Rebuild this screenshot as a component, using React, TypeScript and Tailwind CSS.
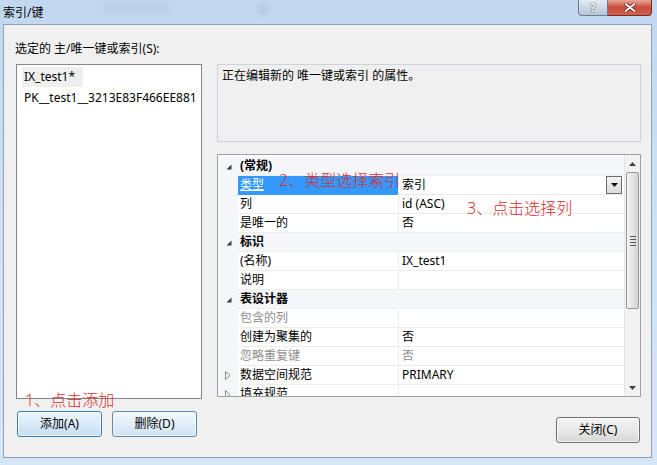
import React from "react";

const Expanded = () => (
  <svg width="6" height="6" viewBox="0 0 6 6" className="block">
    <polygon points="5.5,0.5 5.5,5.5 0.5,5.5" fill="#3a3a3a" />
  </svg>
);

const Collapsed = () => (
  <svg width="6" height="9" viewBox="0 0 6 9" className="block">
    <polygon points="0.5,0.5 5,4.5 0.5,8.5" fill="none" stroke="#8a8a8a" strokeWidth="1" />
  </svg>
);

type Row =
  | { kind: "cat"; name: string }
  | { kind: "prop"; name: string; value?: string; disabled?: boolean; selected?: boolean; collapsed?: boolean; dropdown?: boolean };

const rows: Row[] = [
  { kind: "cat", name: "(常规)" },
  { kind: "prop", name: "类型", value: "索引", selected: true, dropdown: true },
  { kind: "prop", name: "列", value: "id (ASC)" },
  { kind: "prop", name: "是唯一的", value: "否" },
  { kind: "cat", name: "标识" },
  { kind: "prop", name: "(名称)", value: "IX_test1" },
  { kind: "prop", name: "说明", value: "" },
  { kind: "cat", name: "表设计器" },
  { kind: "prop", name: "包含的列", value: "", disabled: true },
  { kind: "prop", name: "创建为聚集的", value: "否" },
  { kind: "prop", name: "忽略重复键", value: "否", disabled: true },
  { kind: "prop", name: "数据空间规范", value: "PRIMARY", collapsed: true },
  { kind: "prop", name: "填充规范", value: "", collapsed: true },
];

function GridRow({ r }: { r: Row }) {
  if (r.kind === "cat") {
    return (
      <div className="h-[19px] flex shrink-0 bg-[#f4f6f9]">
        <div className="w-[20px] flex items-center justify-center pl-[1px]">
          <Expanded />
        </div>
        <div className="flex-1 border-b border-[#eceef1] flex items-center pl-[2px] font-bold leading-[18px]">
          {r.name}
        </div>
      </div>
    );
  }
  return (
    <div className="h-[19px] flex shrink-0">
      <div className="w-[20px] bg-[#f4f6f9] flex items-center justify-center">
        {r.collapsed ? <Collapsed /> : null}
      </div>
      <div
        className={
          r.selected
            ? "w-[160px] bg-[#3399ff] text-white flex items-center pl-[2px] border-b border-[#3399ff]"
            : "w-[160px] bg-white flex items-center pl-[2px] border-b border-[#ededed] " +
              (r.disabled ? "text-[#8d8d8d]" : "text-black")
        }
      >
        <span className={r.selected ? "underline underline-offset-[1px] leading-[16px]" : "leading-[16px]"}>
          {r.name}
        </span>
      </div>
      <div
        className={
          "flex-1 bg-white border-l border-[#ededed] border-b flex items-center pl-[3px] relative " +
          (r.disabled ? "text-[#8d8d8d]" : "text-black")
        }
      >
        <span className="leading-[16px]">{r.value}</span>
        {r.dropdown ? (
          <div className="absolute right-[2px] top-0 w-[16px] h-[18px] border border-[#6e6e6e] bg-gradient-to-b from-[#f4f4f4] to-[#dcdcdc] flex items-center justify-center">
            <svg width="7" height="4" viewBox="0 0 7 4">
              <polygon points="0,0 7,0 3.5,4" fill="#111" />
            </svg>
          </div>
        ) : null}
      </div>
    </div>
  );
}

export default function App() {
  return (
    <div className="w-[657px] h-[465px] bg-gradient-to-b from-[#c2d8f0] via-[#cfe1f4] to-[#d7e6f6] flex flex-col font-['Noto_Sans','Noto_Sans_CJK_SC',sans-serif] text-[12px] text-black relative overflow-hidden">
      {/* title bar */}
      <div className="h-[24px] shrink-0 flex items-start relative">
        <span className="ml-[3px] mt-[4px] leading-[18px] text-[12px]">索引/键</span>
        <div className="absolute left-[100px] top-[5px] w-[70px] h-[8px] rounded-full bg-[#aabccf] opacity-40 blur-[4px]" />
        <div className="absolute left-[257px] top-[5px] w-[12px] h-[10px] rounded-full bg-[#9db0c4] opacity-40 blur-[3px]" />
        <div className="ml-auto mr-[5px] flex">
          <div className="w-[30px] h-[16px] border border-t-0 border-[#6b7b90] rounded-bl-[4px] bg-gradient-to-b from-[#e6ecf3] to-[#b7c4d4] flex items-center justify-center text-white font-bold text-[12px] leading-none [text-shadow:0_0_1px_#333,0_0_1px_#333]">
            ?
          </div>
          <div className="w-[44px] h-[16px] border border-t-0 border-l-0 border-[#7a2a22] rounded-br-[4px] bg-gradient-to-b from-[#e9a496] via-[#c94a3c] to-[#d0604f] flex items-center justify-center">
            <svg width="12" height="9" viewBox="0 0 12 9">
              <path d="M1.5 1 L10.5 8 M10.5 1 L1.5 8" stroke="#5a1a14" strokeWidth="3.2" strokeLinecap="round" />
              <path d="M1.5 1 L10.5 8 M10.5 1 L1.5 8" stroke="#ffffff" strokeWidth="1.8" strokeLinecap="round" />
            </svg>
          </div>
        </div>
      </div>

      {/* client area */}
      <div className="ml-[3px] mr-[5px] mb-[7px] flex-1 border border-[#8ea2b7] bg-[#f0f0f0] flex flex-col">
        <div className="pt-[16px] pl-[11px] leading-[16px]">选定的 主/唯一键或索引(S):</div>
        <div className="mt-[7px] pl-[12px] flex">
          {/* left column */}
          <div className="w-[186px] flex flex-col">
            <div className="h-[335px] border border-[#828790] bg-white pt-[1px] pl-[5px]">
              <div className="h-[21px] flex items-center">
                <span className="bg-[#efefef] pl-[2px] pr-[8px] leading-[20px]">IX_test1*</span>
              </div>
              <div className="h-[21px] flex items-center pl-[2px]">
                <span className="leading-[20px]">PK__test1__3213E83F466EE881</span>
              </div>
            </div>
            <div className="mt-[12px] flex gap-[10px] pl-[1px]">
              <button className="w-[85px] h-[26px] rounded-[3px] border border-[#3c7fb1] bg-gradient-to-b from-[#eaf4fc] via-[#d9ebf9] to-[#c3def3] shadow-[inset_0_0_0_1px_rgba(255,255,255,0.6)] text-[12px] leading-none">
                添加(A)
              </button>
              <button className="w-[85px] h-[26px] rounded-[3px] border border-[#5f89ab] bg-gradient-to-b from-[#f1f7fc] via-[#e2eef8] to-[#cfe3f3] shadow-[inset_0_0_0_1px_rgba(255,255,255,0.6)] text-[12px] leading-none">
                删除(D)
              </button>
            </div>
          </div>

          {/* right column */}
          <div className="ml-[15px] w-[424px] flex flex-col">
            <div className="h-[78px] border border-[#ccd3da] bg-[#f0f0f0] pl-[4px] pt-[3px] leading-[16px]">
              正在编辑新的 唯一键或索引 的属性。
            </div>
            <div className="mt-[12px] h-[243px] border border-[#a0a0a0] bg-white flex overflow-hidden">
              <div className="flex-1 flex flex-col pt-[2px] overflow-hidden">
                {rows.map((r, i) => (
                  <GridRow key={i} r={r} />
                ))}
              </div>
              {/* scrollbar */}
              <div className="w-[16px] bg-[#f2f2f2] border-l border-[#e6e6e6] flex flex-col items-center">
                <div className="h-[17px] w-full flex items-center justify-center">
                  <svg width="7" height="4" viewBox="0 0 7 4">
                    <polygon points="3.5,0 7,4 0,4" fill="#404040" />
                  </svg>
                </div>
                <div className="w-[13px] h-[137px] rounded-[2px] border border-[#979797] bg-gradient-to-r from-[#f3f3f3] via-[#e6e6e6] to-[#d4d4d4] flex flex-col items-center justify-center gap-[2px]">
                  <div className="w-[6px] h-[1px] bg-[#555]" />
                  <div className="w-[6px] h-[1px] bg-[#555]" />
                  <div className="w-[6px] h-[1px] bg-[#555]" />
                  <div className="w-[6px] h-[1px] bg-[#555]" />
                </div>
                <div className="flex-1" />
                <div className="h-[17px] w-full flex items-center justify-center">
                  <svg width="7" height="4" viewBox="0 0 7 4">
                    <polygon points="0,0 7,0 3.5,4" fill="#404040" />
                  </svg>
                </div>
              </div>
            </div>
            <div className="mt-[20px] flex justify-end pr-[1px]">
              <button className="w-[84px] h-[26px] rounded-[3px] border border-[#707070] bg-gradient-to-b from-[#f3f3f3] via-[#e9e9e9] to-[#d6d6d6] shadow-[inset_0_0_0_1px_rgba(255,255,255,0.7)] text-[12px] leading-none">
                关闭(C)
              </button>
            </div>
          </div>
        </div>
      </div>

      {/* red annotations */}
      <div className="absolute left-[279px] top-[170px] text-[16px] leading-[20px] text-[#da2c2c] font-light whitespace-nowrap">
        2、类型选择索引
      </div>
      <div className="absolute left-[467px] top-[198px] text-[16px] leading-[20px] text-[#da2c2c] font-light whitespace-nowrap">
        3、点击选择列
      </div>
      <div className="absolute left-[25px] top-[390px] text-[16px] leading-[20px] text-[#da2c2c] font-light whitespace-nowrap">
        1、点击添加
      </div>
    </div>
  );
}
